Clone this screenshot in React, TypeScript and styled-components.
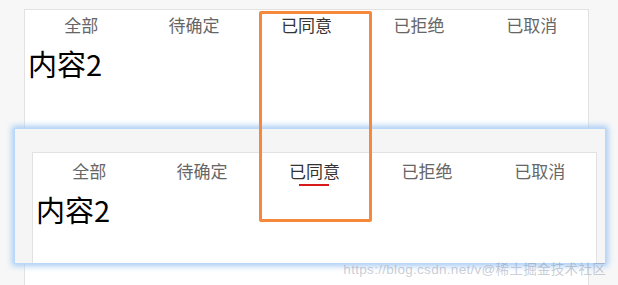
import styled, { createGlobalStyle } from "styled-components";

const GlobalStyle = createGlobalStyle`
    html, body {
        margin:0;
        padding:0;
        background:#f6f6f6;
        font-family:"Noto Sans CJK SC", "Noto Sans", sans-serif;
    }
`

const Page = styled.div`
    position:relative;
    width:618px;
    height:285px;
    overflow:hidden;
    background:#f7f7f7;
    padding:9px 0 0 24px;
    box-sizing:border-box;
`
const Card = styled.div<{ $top: number }>`
    width:565px;
    height:100%;
    box-sizing:border-box;
    padding-top:${props => props.$top}px;
    background:#fff;
    border:1px solid #e2e2e2;
    border-bottom:none;
`
const TabBar = styled.ul`
    display:flex;
    margin:0;
    padding:0;
    list-style:none;
`
const Tab = styled.li<{ $active?: boolean }>`
    position:relative;
    flex:1;
    height:30px;
    line-height:30px;
    text-align:center;
    font-size:17px;
    color:${props => (props.$active ? "#333" : "#666")};
`
const Underline = styled.span`
    position:absolute;
    left:50%;
    bottom:0;
    width:30px;
    height:2px;
    margin-left:-15px;
    background:#d71a1b;
`
const Content = styled.div`
    padding:4px 0 0 3px;
    font-size:29px;
    line-height:38px;
    color:#000;
`
// highlighted copy of the tabs, laid over the first screenshot
const Overlay = styled.div`
    position:absolute;
    left:14px;
    top:128px;
    width:592px;
    height:136px;
    box-sizing:border-box;
    padding:23px 0 0 17px;
    background:#f5f5f5;
    border:1px solid #b9d7f8;
    box-shadow:0 0 6px 2px #a6cbf4;
    overflow:hidden;
`
const Frame = styled.div`
    position:absolute;
    left:259px;
    top:11px;
    width:107px;
    height:205px;
    border:3px solid #f5883a;
    border-radius:2px;
`
const Watermark = styled.div`
    position:absolute;
    right:12px;
    bottom:7px;
    font-size:13.5px;
    font-family:"Liberation Sans", "Noto Sans CJK SC", sans-serif;
    color:rgba(120, 130, 150, 0.4);
    letter-spacing:0.3px;
`

const tabs = ["全部", "待确定", "已同意", "已拒绝", "已取消"];

function Tabs({ underline }: { underline?: boolean }) {
    return (
        <TabBar>
            {tabs.map((name, i) => (
                <Tab key={name} $active={i === 2}>
                    {name}
                    {underline && i === 2 && <Underline />}
                </Tab>
            ))}
        </TabBar>
    )
}

function App() {
    return (
        <Page>
            <GlobalStyle />
            <Card $top={0}>
                <Tabs />
                <Content>内容2</Content>
            </Card>
            <Overlay>
                <Card $top={3}>
                    <Tabs underline />
                    <Content>内容2</Content>
                </Card>
            </Overlay>
            <Frame />
            <Watermark>https://blog.csdn.net/v@稀土掘金技术社区</Watermark>
        </Page>
    )
}

export default App;
